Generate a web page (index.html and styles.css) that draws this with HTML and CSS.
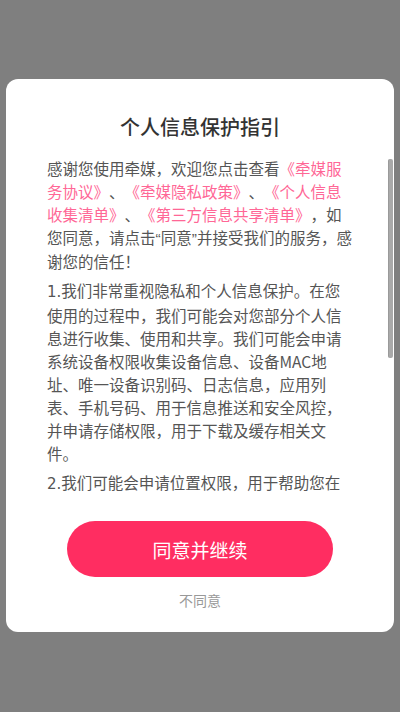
FILE: index.html
```html
<!DOCTYPE html>
<html lang="zh-CN">
<head>
<meta charset="utf-8">
<meta name="viewport" content="width=device-width, initial-scale=1">
<title>个人信息保护指引</title>
<link rel="stylesheet" href="styles.css">
</head>
<body>
<div class="dialog">
  <h1 class="title">个人信息保护指引</h1>
  <div class="scroll-wrap">
    <div class="scroll">
      <p class="para">感谢您使用牵媒，欢迎您点击查看<span class="link">《牵媒服务协议》</span>、<span class="link">《牵媒隐私政策》</span>、<span class="link">《个人信息收集清单》</span>、<span class="link">《第三方信息共享清单》</span>，如您同意，请点击<span class="quote">“</span>同意<span class="quote">”</span>并接受我们的服务，感谢您的信任！</p>
      <p class="para"><span class="num">1.</span>我们非常重视隐私和个人信息保护。在您使用的过程中，我们可能会对您部分个人信息进行收集、使用和共享。我们可能会申请系统设备权限收集设备信息、设备MAC地址、唯一设备识别码、日志信息，应用列表、手机号码、用于信息推送和安全风控，并申请存储权限，用于下载及缓存相关文件。</p>
      <p class="para"><span class="num">2.</span>我们可能会申请位置权限，用于帮助您在使用过程中为您推荐附近的用户和内容，您可以随时在系统设置中关闭该权限。</p>
      <p class="para"><span class="num">3.</span>未经您的同意，我们不会向第三方提供您的个人信息。</p>
    </div>
    <div class="thumb"></div>
  </div>
  <button class="agree" type="button">同意并继续</button>
  <div class="disagree">不同意</div>
</div>
</body>
</html>
```

FILE: styles.css
```css
html, body {
  margin: 0;
  padding: 0;
}

body {
  width: 400px;
  height: 712px;
  box-sizing: border-box;
  padding-top: 79px;
  background: #7f7f7f;
  display: flex;
  justify-content: center;
  align-items: flex-start;
  font-family: "Noto Sans CJK SC", "Noto Sans", "Liberation Sans", sans-serif;
}

.dialog {
  width: 388px;
  height: 553px;
  box-sizing: border-box;
  background: #ffffff;
  border-radius: 12px;
  padding: 34px 0 21px;
  display: flex;
  flex-direction: column;
  align-items: center;
}

.title {
  margin: 0;
  font-size: 20px;
  line-height: 28px;
  font-weight: 500;
  color: #333333;
  text-align: center;
}

.scroll-wrap {
  position: relative;
  align-self: stretch;
  margin-top: 16px;
  height: 336px;
}

.scroll {
  height: 100%;
  overflow: hidden;
  padding: 0 40px 0 41px;
}

.para {
  margin: 0 0 6px;
  font-size: 15.5px;
  line-height: 23px;
  color: #555555;
  text-spacing-trim: space-all;
  line-break: strict;
}

.link {
  color: #ff6796;
}

.quote {
  font-family: "Liberation Sans", sans-serif;
}

.num {
  font-family: "DejaVu Sans", "Noto Sans", sans-serif;
  font-size: 15px;
}

.thumb {
  position: absolute;
  top: 2px;
  right: 1px;
  width: 5px;
  height: 199px;
  background: #a9a9a9;
  border-left: 1px solid #9a9a9a;
  box-sizing: border-box;
  border-radius: 2px;
}

.agree {
  margin-top: 28px;
  width: 266px;
  height: 56px;
  border: none;
  border-radius: 28px;
  background: #ff2d61;
  color: #ffffff;
  font-family: inherit;
  font-size: 19px;
  font-weight: 400;
  padding: 0;
}

.disagree {
  margin-top: 13px;
  font-size: 14px;
  line-height: 20px;
  color: #999999;
}
```
